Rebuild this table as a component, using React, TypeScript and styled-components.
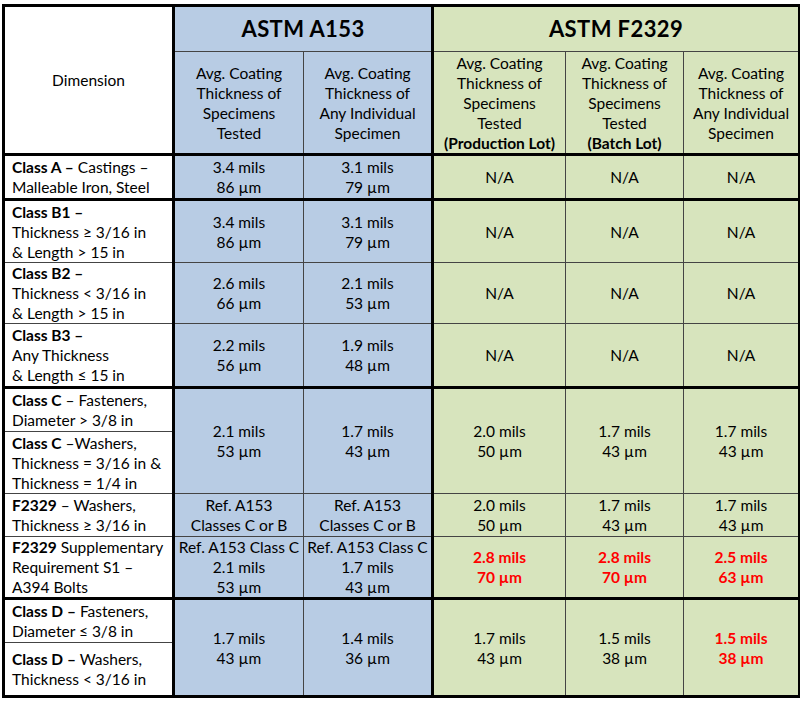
import React from 'react';
import styled, { createGlobalStyle } from 'styled-components';

const GlobalStyle = createGlobalStyle`
  html, body { margin: 0; padding: 0; background: #ffffff; }
  body { font-family: Lato, "Liberation Sans", sans-serif; color: #000000; }
`;

const Page = styled.div`
  padding: 4px 0 0 2px;
`;

const Table = styled.table`
  border-collapse: collapse;
  table-layout: fixed;
  width: 796px;
  border: 3px solid #000;
  font-size: 15.5px;
  line-height: 20px;
`;

const ColGroup = styled.colgroup`
  border-left: 3px solid #000;
  border-right: 3px solid #000;
`;

const Col = styled.col<{ $w: number }>`
  width: ${p => p.$w}px;
`;

const Head = styled.thead`
  border-bottom: 3px solid #000;
`;

const Block = styled.tbody`
  border-top: 3px solid #000;
  border-bottom: 3px solid #000;
`;

const Row = styled.tr<{ $h: number }>`
  height: ${p => p.$h}px;
`;

type Tone = 'white' | 'blue' | 'green';
const tones: Record<Tone, string> = {
  white: '#ffffff',
  blue: '#b8cce4',
  green: '#d7e4bd',
};

const Cell = styled.td<{ $tone: Tone; $left?: boolean }>`
  background: ${p => tones[p.$tone]};
  border: 1px solid #444;
  padding: ${p => (p.$left ? '0 4px 0 7px' : '0')};
  text-align: ${p => (p.$left ? 'left' : 'center')};
  vertical-align: middle;
  white-space: nowrap;
`;

const TitleCell = styled.th<{ $tone: Tone }>`
  background: ${p => tones[p.$tone]};
  border: 1px solid #444;
  font-size: 22px;
  font-weight: 700;
  letter-spacing: 0.4px;
  color: #000;
  vertical-align: middle;
  padding: 0;
`;

const SubHead = styled.th<{ $tone: Tone }>`
  background: ${p => tones[p.$tone]};
  border: 1px solid #444;
  font-weight: 400;
  vertical-align: middle;
  white-space: nowrap;
  padding: 0;
`;

const Line = styled.div<{ $red?: boolean }>`
  display: block;
  color: ${p => (p.$red ? '#ff0000' : 'inherit')};
  font-weight: ${p => (p.$red ? 700 : 'inherit')};
`;

const B = styled.b`
  font-weight: 700;
`;

type Val = { lines: string[]; red?: boolean };

const Lines: React.FC<Val> = ({ lines, red }) => (
  <>
    {lines.map((l, i) => (
      <Line key={i} $red={red}>
        {l}
      </Line>
    ))}
  </>
);

const v = (mils: string, um: string, red?: boolean): Val => ({
  lines: [`${mils} mils`, `${um} µm`],
  red,
});
const na: Val = { lines: ['N/A'] };

type RowDef = {
  h: number;
  dim: React.ReactNode;
  vals?: Val[];
  span?: number;
};

const blocks: RowDef[][] = [
  [
    {
      h: 45,
      dim: (
        <>
          <Line><B>Class A –</B> Castings –</Line>
          <Line>Malleable Iron, Steel</Line>
        </>
      ),
      vals: [v('3.4', '86'), v('3.1', '79'), na, na, na],
    },
  ],
  [
    {
      h: 63,
      dim: (
        <>
          <Line><B>Class B1 –</B></Line>
          <Line>Thickness ≥ 3/16 in</Line>
          <Line>&amp; Length &gt; 15 in</Line>
        </>
      ),
      vals: [v('3.4', '86'), v('3.1', '79'), na, na, na],
    },
    {
      h: 61,
      dim: (
        <>
          <Line><B>Class B2 –</B></Line>
          <Line>Thickness &lt; 3/16 in</Line>
          <Line>&amp; Length &gt; 15 in</Line>
        </>
      ),
      vals: [v('2.6', '66'), v('2.1', '53'), na, na, na],
    },
    {
      h: 64,
      dim: (
        <>
          <Line><B>Class B3 –</B></Line>
          <Line>Any Thickness</Line>
          <Line>&amp; Length ≤ 15 in</Line>
        </>
      ),
      vals: [v('2.2', '56'), v('1.9', '48'), na, na, na],
    },
  ],
  [
    {
      h: 44,
      dim: (
        <>
          <Line><B>Class C</B> – Fasteners,</Line>
          <Line>Diameter &gt; 3/8 in</Line>
        </>
      ),
      vals: [v('2.1', '53'), v('1.7', '43'), v('2.0', '50'), v('1.7', '43'), v('1.7', '43')],
      span: 2,
    },
    {
      h: 62,
      dim: (
        <>
          <Line><B>Class C</B> –Washers,</Line>
          <Line>Thickness = 3/16 in &amp;</Line>
          <Line>Thickness = 1/4 in</Line>
        </>
      ),
    },
    {
      h: 43,
      dim: (
        <>
          <Line><B>F2329</B> – Washers,</Line>
          <Line>Thickness ≥ 3/16 in</Line>
        </>
      ),
      vals: [
        { lines: ['Ref. A153', 'Classes C or B'] },
        { lines: ['Ref. A153', 'Classes C or B'] },
        v('2.0', '50'),
        v('1.7', '43'),
        v('1.7', '43'),
      ],
    },
    {
      h: 62,
      dim: (
        <>
          <Line><B>F2329</B> Supplementary</Line>
          <Line>Requirement S1 –</Line>
          <Line>A394 Bolts</Line>
        </>
      ),
      vals: [
        { lines: ['Ref. A153 Class C', '2.1 mils', '53 µm'] },
        { lines: ['Ref. A153 Class C', '1.7 mils', '43 µm'] },
        v('2.8', '70', true),
        v('2.8', '70', true),
        v('2.5', '63', true),
      ],
    },
  ],
  [
    {
      h: 44,
      dim: (
        <>
          <Line><B>Class D –</B> Fasteners,</Line>
          <Line>Diameter ≤ 3/8 in</Line>
        </>
      ),
      vals: [v('1.7', '43'), v('1.4', '36'), v('1.7', '43'), v('1.5', '38'), v('1.5', '38', true)],
      span: 2,
    },
    {
      h: 54,
      dim: (
        <>
          <Line><B>Class D –</B> Washers,</Line>
          <Line>Thickness &lt; 3/16 in</Line>
        </>
      ),
    },
  ],
];

const toneFor = (i: number): Tone => (i < 2 ? 'blue' : 'green');

const subHeads: React.ReactNode[] = [
  <Lines lines={['Avg. Coating', 'Thickness of', 'Specimens', 'Tested']} />,
  <Lines lines={['Avg. Coating', 'Thickness of', 'Any Individual', 'Specimen']} />,
  <>
    <Lines lines={['Avg. Coating', 'Thickness of', 'Specimens', 'Tested']} />
    <Line><B>(Production Lot)</B></Line>
  </>,
  <>
    <Lines lines={['Avg.  Coating', 'Thickness of', 'Specimens', 'Tested']} />
    <Line><B>(Batch Lot)</B></Line>
  </>,
  <Lines lines={['Avg. Coating', 'Thickness of', 'Any Individual', 'Specimen']} />,
];

export default function App() {
  return (
    <Page>
      <GlobalStyle />
      <Table>
        <ColGroup>
          <Col $w={170} />
        </ColGroup>
        <ColGroup>
          <Col $w={130} />
          <Col $w={129} />
        </ColGroup>
        <ColGroup>
          <Col $w={133} />
          <Col $w={118} />
          <Col $w={116} />
        </ColGroup>
        <Head>
          <Row $h={46}>
            <SubHead $tone="white" rowSpan={2}>Dimension</SubHead>
            <TitleCell $tone="blue" colSpan={2}>ASTM A153</TitleCell>
            <TitleCell $tone="green" colSpan={3}>ASTM F2329</TitleCell>
          </Row>
          <Row $h={103}>
            {subHeads.map((s, i) => (
              <SubHead key={i} $tone={toneFor(i)}>
                {s}
              </SubHead>
            ))}
          </Row>
        </Head>
        {blocks.map((rows, bi) => (
          <Block key={bi}>
            {rows.map((r, ri) => (
              <Row key={ri} $h={r.h}>
                <Cell $tone="white" $left>
                  {r.dim}
                </Cell>
                {r.vals?.map((val, vi) => (
                  <Cell key={vi} $tone={toneFor(vi)} rowSpan={r.span}>
                    <Lines {...val} />
                  </Cell>
                ))}
              </Row>
            ))}
          </Block>
        ))}
      </Table>
    </Page>
  );
}
